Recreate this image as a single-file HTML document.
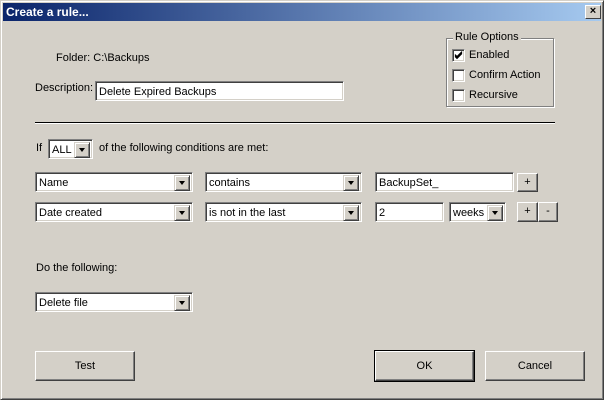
<!DOCTYPE html>
<html><head><style>
*{margin:0;padding:0;box-sizing:border-box}
body{width:604px;height:400px;background:#d4d0c8;font-family:"Liberation Sans",sans-serif;font-size:11px;color:#000;position:relative;overflow:hidden}
.win{position:absolute;left:0;top:0;width:604px;height:400px;border:1px solid;border-color:#d4d0c8 #404040 #404040 #d4d0c8;box-shadow:inset 1px 1px 0 #fff,inset -1px -1px 0 #808080}
.title{position:absolute;left:3px;top:3px;width:598px;height:18px;background:linear-gradient(to right,#0a246a,#a6caf0);color:#fff;font-weight:bold;font-size:12px;line-height:18px;padding-left:3px}
.close{position:absolute;left:585px;top:5px;width:16px;height:14px;background:#d4d0c8;border:1px solid;border-color:#fff #404040 #404040 #fff;font-size:11px;line-height:11px;text-align:center;color:#000;font-weight:bold}
.a{position:absolute;white-space:nowrap}
.in{position:absolute;background:#fff;border:1px solid;border-color:#808080 #fff #fff #808080;box-shadow:inset 1px 1px 0 #404040,inset -1px -1px 0 #d4d0c8;padding:4px 0 0 3px;height:20px;white-space:nowrap;overflow:hidden}
.dd{position:absolute;right:2px;top:2px;width:16px;height:16px;background:#d4d0c8;border:1px solid;border-color:#d4d0c8 #404040 #404040 #d4d0c8;box-shadow:inset 1px 1px 0 #fff,inset -1px -1px 0 #808080}
.dd:after{content:"";position:absolute;left:4px;top:5px;border-left:3.5px solid transparent;border-right:3.5px solid transparent;border-top:4px solid #000}
.btn{position:absolute;background:#d4d0c8;border:1px solid;border-color:#fff #404040 #404040 #fff;box-shadow:inset -1px -1px 0 #808080;text-align:center}
.cb{position:absolute;width:13px;height:13px;background:#fff;border:1px solid;border-color:#808080 #fff #fff #808080;box-shadow:inset 1px 1px 0 #404040,inset -1px -1px 0 #d4d0c8}
</style></head><body>
<div class="win"></div>
<div class="title">Create a rule...</div>
<div class="close">×</div>

<div class="a" style="left:56px;top:52px">Folder: C:\Backups</div>
<div class="a" style="left:35px;top:82px">Description:</div>
<div class="in" style="left:95px;top:81px;width:249px">Delete Expired Backups</div>

<div style="position:absolute;left:446px;top:38px;width:108px;height:69px;border:1px solid #808080;box-shadow:1px 1px 0 #fff,inset 1px 1px 0 #fff"></div>
<div class="a" style="left:453px;top:31px;background:#d4d0c8;padding:0 2px">Rule Options</div>
<div class="cb" style="left:452px;top:49px"><svg width="11" height="11" style="position:absolute;left:0;top:0"><path d="M2 4.5l2 2 5-5M2 5.5l2 2 5-5M2 6.5l2 2 5-5" stroke="#000" fill="none"/></svg></div>
<div class="a" style="left:469px;top:49px">Enabled</div>
<div class="cb" style="left:452px;top:69px"></div>
<div class="a" style="left:469px;top:69px">Confirm Action</div>
<div class="cb" style="left:452px;top:89px"></div>
<div class="a" style="left:469px;top:89px">Recursive</div>

<div style="position:absolute;left:35px;top:122px;width:520px;height:2px;border-top:1px solid #000;border-bottom:1px solid #fff"></div>

<div class="a" style="left:36px;top:142px">If</div>
<div class="in" style="left:48px;top:139px;width:45px">ALL<div class="dd"></div></div>
<div class="a" style="left:99px;top:142px">of the following conditions are met:</div>

<div class="in" style="left:35px;top:172px;width:158px">Name<div class="dd"></div></div>
<div class="in" style="left:205px;top:172px;width:157px">contains<div class="dd"></div></div>
<div class="in" style="left:375px;top:172px;width:139px">BackupSet_</div>
<div class="btn" style="left:517px;top:173px;width:21px;height:19px;line-height:16px">+</div>

<div class="in" style="left:35px;top:202px;width:158px">Date created<div class="dd"></div></div>
<div class="in" style="left:205px;top:202px;width:157px">is not in the last<div class="dd"></div></div>
<div class="in" style="left:375px;top:202px;width:69px">2</div>
<div class="in" style="left:449px;top:202px;width:57px">weeks<div class="dd"></div></div>
<div class="btn" style="left:517px;top:202px;width:21px;height:20px;line-height:17px">+</div>
<div class="btn" style="left:538px;top:202px;width:20px;height:20px;line-height:17px">-</div>

<div class="a" style="left:36px;top:262px">Do the following:</div>
<div class="in" style="left:35px;top:292px;width:158px">Delete file<div class="dd"></div></div>

<div class="btn" style="left:35px;top:351px;width:100px;height:30px;line-height:28px">Test</div>
<div class="btn" style="left:375px;top:351px;width:99px;height:30px;line-height:28px;outline:1px solid #000">OK</div>
<div class="btn" style="left:485px;top:351px;width:100px;height:30px;line-height:28px">Cancel</div>
</body></html>
